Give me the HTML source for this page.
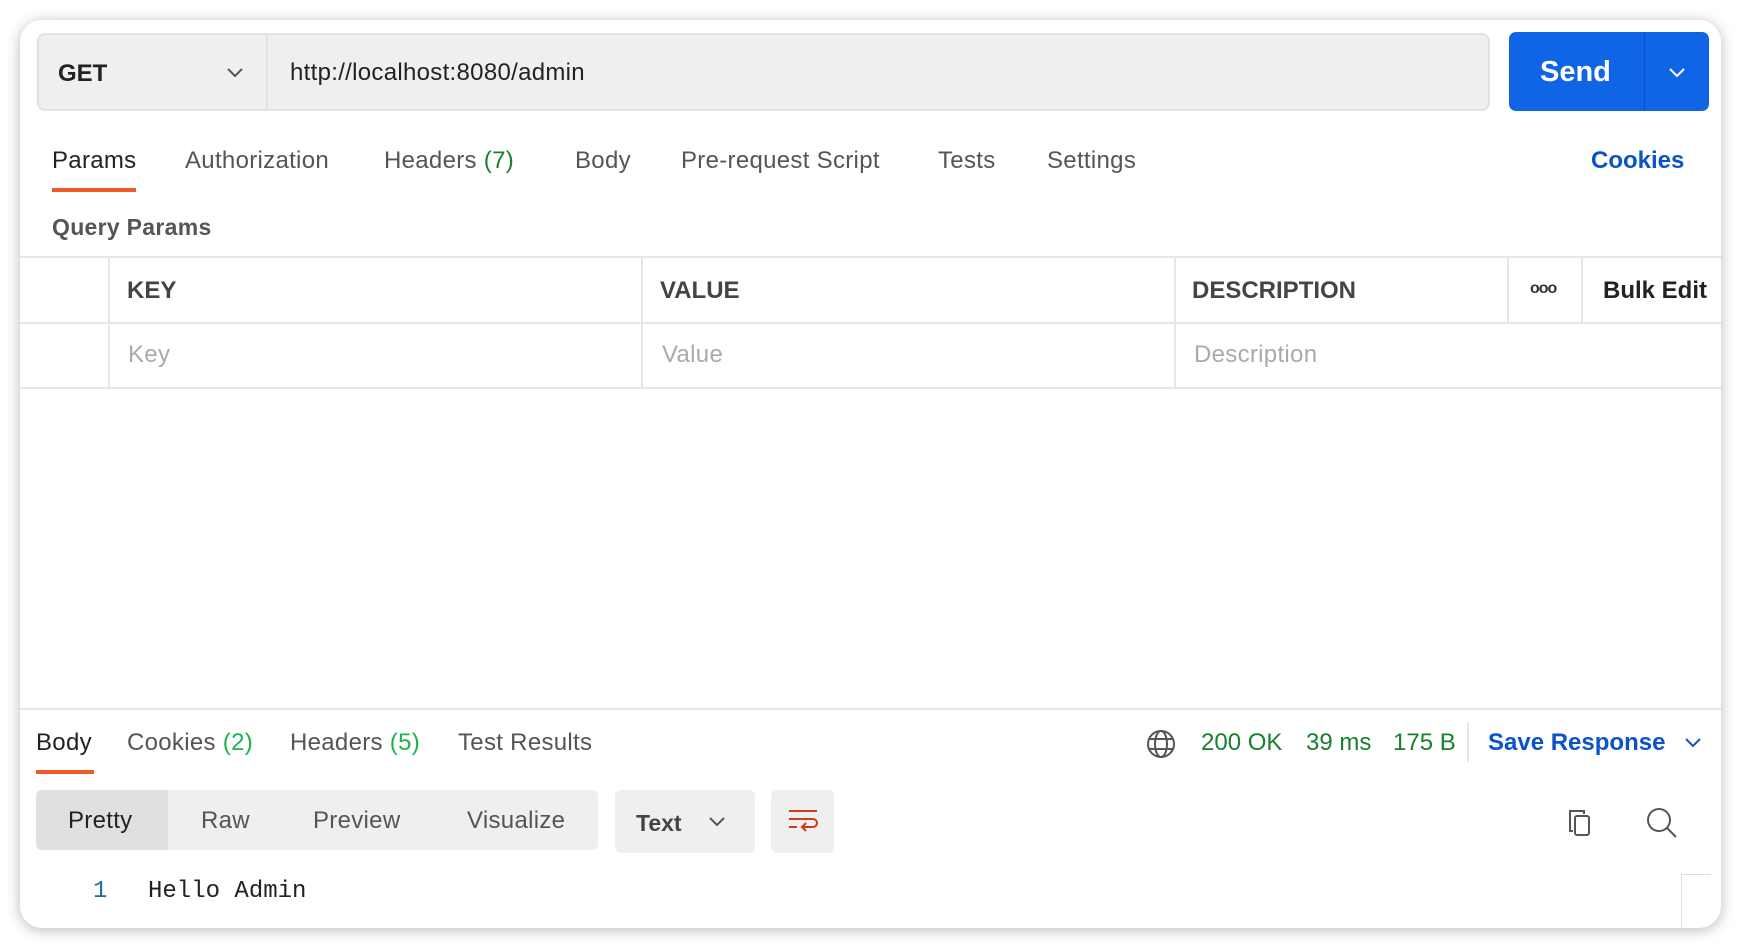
<!DOCTYPE html>
<html><head><meta charset="utf-8"><style>
*{box-sizing:border-box;margin:0;padding:0}
body{width:1740px;height:948px;background:#fff;font-family:"Liberation Sans",sans-serif;position:relative;overflow:hidden}
.card{position:absolute;left:20px;top:20px;width:1701px;height:908px;background:#fff;border-radius:22px;box-shadow:0 2px 14px rgba(0,0,0,.28);overflow:hidden}
.a{position:absolute;white-space:nowrap}
.t{font-size:24px;color:#555;line-height:30px;letter-spacing:0.3px}
.g{color:#1a7f2e}
.lg{color:#1fb14a}
.hl{position:absolute;background:#e6e6e6}
</style></head><body>
<div class="card">
 <div class="a" style="left:17px;top:13px;width:1453px;height:78px;background:#efefef;border:2px solid #e2e2e2;border-radius:8px"></div>
 <div class="a" style="left:246px;top:13px;width:2px;height:78px;background:#e2e2e2"></div>
 <div class="a" style="left:38px;top:40px;font-size:24px;font-weight:bold;color:#222">GET</div>
 <svg class="a" style="left:206px;top:47px" width="18" height="12"><path d="M2 2l7 7 7-7" stroke="#555" stroke-width="2" fill="none"/></svg>
 <div class="a" style="left:270px;top:39px;font-size:24px;color:#222;letter-spacing:0.3px">http://localhost:8080/admin</div>
 <div class="a" style="left:1489px;top:12px;width:200px;height:79px;background:#0f65e6;border-radius:7px"></div>
 <div class="a" style="left:1624px;top:12px;width:1px;height:79px;background:#0a55c4"></div>
 <div class="a" style="left:1520px;top:36px;font-size:29px;font-weight:bold;color:#fff">Send</div>
 <svg class="a" style="left:1648px;top:47px" width="18" height="12"><path d="M2 2l7 7 7-7" stroke="#fff" stroke-width="2" fill="none"/></svg>

 <div class="a t" style="left:32px;top:126px;color:#222">Params</div>
 <div class="a" style="left:32px;top:168px;width:84px;height:4px;background:#f05a28"></div>
 <div class="a t" style="left:165px;top:126px">Authorization</div>
 <div class="a t" style="left:364px;top:126px">Headers <span class="g">(7)</span></div>
 <div class="a t" style="left:555px;top:126px">Body</div>
 <div class="a t" style="left:661px;top:126px">Pre-request Script</div>
 <div class="a t" style="left:918px;top:126px">Tests</div>
 <div class="a t" style="left:1027px;top:126px">Settings</div>
 <div class="a t" style="left:1571px;top:126px;color:#0b53c9;font-weight:bold;letter-spacing:0">Cookies</div>
 <div class="a t" style="left:32px;top:192px;font-weight:bold;font-size:23px">Query Params</div>

 <div class="hl" style="left:0;top:236px;width:1701px;height:2px"></div>
 <div class="hl" style="left:0;top:302px;width:1701px;height:2px"></div>
 <div class="hl" style="left:0;top:367px;width:1701px;height:2px"></div>
 <div class="hl" style="left:88px;top:236px;width:2px;height:133px"></div>
 <div class="hl" style="left:621px;top:236px;width:2px;height:133px"></div>
 <div class="hl" style="left:1154px;top:236px;width:2px;height:133px"></div>
 <div class="hl" style="left:1487px;top:236px;width:2px;height:67px"></div>
 <div class="hl" style="left:1561px;top:236px;width:2px;height:67px"></div>
 <div class="a t" style="left:107px;top:256px;font-weight:bold;color:#444;letter-spacing:0">KEY</div>
 <div class="a t" style="left:640px;top:256px;font-weight:bold;color:#444;letter-spacing:0">VALUE</div>
 <div class="a t" style="left:1172px;top:256px;font-weight:bold;color:#444;letter-spacing:0">DESCRIPTION</div>
 <div class="a" style="left:1510px;top:260px;font-size:16px;font-weight:bold;color:#333;letter-spacing:-1px">ooo</div>
 <div class="a t" style="left:1583px;top:256px;font-weight:bold;color:#222;letter-spacing:0">Bulk Edit</div>
 <div class="a t" style="left:108px;top:320px;color:#aaa">Key</div>
 <div class="a t" style="left:642px;top:320px;color:#aaa">Value</div>
 <div class="a t" style="left:1174px;top:320px;color:#aaa">Description</div>

 <div class="hl" style="left:0;top:688px;width:1701px;height:2px"></div>
 <div class="a t" style="left:16px;top:708px;color:#222">Body</div>
 <div class="a" style="left:16px;top:750px;width:58px;height:4px;background:#f05a28"></div>
 <div class="a t" style="left:107px;top:708px">Cookies <span class="lg">(2)</span></div>
 <div class="a t" style="left:270px;top:708px">Headers <span class="lg">(5)</span></div>
 <div class="a t" style="left:438px;top:708px">Test Results</div>
 <svg class="a" style="left:1125px;top:708px" width="32" height="32" viewBox="0 0 32 32"><g stroke="#555" stroke-width="2" fill="none"><circle cx="16" cy="16" r="13"/><ellipse cx="16" cy="16" rx="6" ry="13"/><path d="M4 11h24M4 21h24"/></g></svg>
 <div class="a t g" style="left:1181px;top:708px;letter-spacing:0">200 OK</div>
 <div class="a t g" style="left:1286px;top:708px;letter-spacing:0">39 ms</div>
 <div class="a t g" style="left:1373px;top:708px;letter-spacing:0">175 B</div>
 <div class="a" style="left:1447px;top:702px;width:2px;height:40px;background:#e6e6e6"></div>
 <div class="a t" style="left:1468px;top:708px;color:#0b53c9;font-weight:bold;letter-spacing:0">Save Response</div>
 <svg class="a" style="left:1664px;top:717px" width="18" height="12"><path d="M2 2l7 7 7-7" stroke="#0b53c9" stroke-width="2" fill="none"/></svg>

 <div class="a" style="left:16px;top:770px;width:562px;height:60px;background:#efefef;border-radius:6px;overflow:hidden"><div style="width:132px;height:60px;background:#e0e0e0"></div></div>
 <div class="a t" style="left:48px;top:786px;color:#222">Pretty</div>
 <div class="a t" style="left:181px;top:786px">Raw</div>
 <div class="a t" style="left:293px;top:786px">Preview</div>
 <div class="a t" style="left:447px;top:786px">Visualize</div>
 <div class="a" style="left:595px;top:770px;width:140px;height:63px;background:#efefef;border-radius:6px"></div>
 <div class="a t" style="left:616px;top:788px;font-weight:bold;color:#444;font-size:23px;letter-spacing:0">Text</div>
 <svg class="a" style="left:688px;top:796px" width="18" height="12"><path d="M2 2l7 7 7-7" stroke="#555" stroke-width="2" fill="none"/></svg>
 <div class="a" style="left:751px;top:770px;width:63px;height:63px;background:#efefef;border-radius:6px"></div>
 <svg class="a" style="left:767px;top:788px" width="32" height="28" viewBox="0 0 32 28"><g stroke="#d03a1a" stroke-width="2" fill="none"><path d="M2 3h28M2 11h24a4 4 0 0 1 0 8H16"/><path d="M2 19h8"/><path d="M19 15l-4 4 4 4"/></g></svg>
 <svg class="a" style="left:1545px;top:787px" width="32" height="32" viewBox="0 0 32 32"><g stroke="#555" stroke-width="2" fill="none"><path d="M8 24H5V4h14v3"/><rect x="10" y="9" width="14" height="19" rx="2"/></g></svg>
 <svg class="a" style="left:1625px;top:786px" width="34" height="34" viewBox="0 0 34 34"><g stroke="#555" stroke-width="2" fill="none"><circle cx="14" cy="14" r="11"/><path d="M22 22l9 9"/></g></svg>
 <div class="a" style="left:73px;top:858px;font-family:'Liberation Mono',monospace;font-size:24px;color:#1f6f9f">1</div>
 <div class="a" style="left:128px;top:858px;font-family:'Liberation Mono',monospace;font-size:24px;color:#222">Hello Admin</div>
 <div class="a" style="left:1661px;top:854px;width:30px;height:60px;border-left:1px solid #ddd;border-top:1px solid #ddd"></div>
</div>
</body></html>
